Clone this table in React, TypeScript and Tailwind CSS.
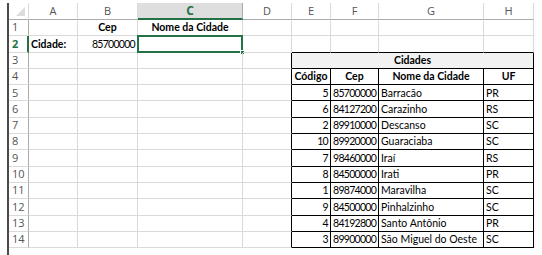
import React from 'react';

const cols = ['A', 'B', 'C', 'D', 'E', 'F', 'G', 'H'];

const cidades: [number, string, string, string][] = [
  [5, '85700000', 'Barracão', 'PR'],
  [6, '84127200', 'Carazinho', 'RS'],
  [2, '89910000', 'Descanso', 'SC'],
  [10, '89920000', 'Guaraciaba', 'SC'],
  [7, '98460000', 'Iraí', 'RS'],
  [8, '84500000', 'Irati', 'PR'],
  [1, '89874000', 'Maravilha', 'SC'],
  [9, '84500000', 'Pinhalzinho', 'SC'],
  [4, '84192800', 'Santo Antônio', 'PR'],
  [3, '89900000', 'São Miguel do Oeste', 'SC'],
];

type CellDef = { text?: string; bold?: boolean; num?: boolean; align?: 'l' | 'c' | 'r'; span?: number; bg?: string };

// builds the contents of row r (1-based), columns A..H
function rowCells(r: number): (CellDef | null)[] {
  const cells: (CellDef | null)[] = cols.map(() => ({}));
  if (r === 1) {
    cells[1] = { text: 'Cep', bold: true, align: 'c' };
    cells[2] = { text: 'Nome da Cidade', bold: true, align: 'c' };
  } else if (r === 2) {
    cells[0] = { text: 'Cidade:', bold: true };
    cells[1] = { text: '85700000', align: 'r', num: true };
  } else if (r === 3) {
    cells[4] = { text: 'Cidades', bold: true, align: 'c', span: 4, bg: 'bg-[#f2f2f2]' };
    cells[5] = null;
    cells[6] = null;
    cells[7] = null;
  } else if (r === 4) {
    cells[4] = { text: 'Código', bold: true, align: 'c' };
    cells[5] = { text: 'Cep', bold: true, align: 'c' };
    cells[6] = { text: 'Nome da Cidade', bold: true, align: 'c' };
    cells[7] = { text: 'UF', bold: true, align: 'c' };
  } else {
    const c = cidades[r - 5];
    cells[4] = { text: String(c[0]), align: 'r', num: true };
    cells[5] = { text: c[1], num: true };
    cells[6] = { text: c[2] };
    cells[7] = { text: c[3] };
  }
  return cells;
}

function borderFor(r: number, ci: number) {
  const inTable = r >= 3 && ci >= 4;
  const right = inTable || (r >= 3 && ci === 3) ? 'border-r-black' : 'border-r-[#dadada]';
  const bottom = inTable || (r === 2 && ci >= 4) ? 'border-b-black' : 'border-b-[#dadada]';
  return `${right} ${bottom}`;
}

export default function App() {
  const rows = Array.from({ length: 14 }, (_, i) => i + 1);

  return (
    <div className="w-[542px] h-[255px] bg-white overflow-hidden pl-[7px] pt-[3px] font-['Lato',sans-serif] text-[10.5px] text-black">
      <div className="border-l-2 border-[#4a4a4a] h-full">
        <div className="grid grid-cols-[20px_49px_60px_105px_49px_39px_48px_105px_50px] grid-rows-[17px_repeat(14,16.3px)]">
          {/* column headers */}
          <div className="relative border-r border-b border-r-[#dadada] border-b-[#ababab]">
            <svg className="absolute right-[3px] bottom-[3px]" width="9" height="9" viewBox="0 0 9 9">
              <polygon points="9,0 9,9 0,9" fill="#dcdcdc" />
            </svg>
          </div>
          {cols.map((c) =>
            c === 'C' ? (
              <div
                key={c}
                className="flex items-center justify-center bg-[#dedede] border-r border-r-[#ababab] border-b-2 border-b-[#217346] text-[#217346] font-bold text-[12px] font-['Open_Sans',sans-serif]"
              >
                {c}
              </div>
            ) : (
              <div
                key={c}
                className="flex items-center justify-center border-r border-b border-r-[#dadada] border-b-[#ababab] text-[#555] text-[11px] font-['Open_Sans',sans-serif]"
              >
                {c}
              </div>
            )
          )}

          {rows.map((r) => (
            <React.Fragment key={r}>
              <div
                className={`flex items-center pl-[3px] border-b border-b-[#dadada] font-['Open_Sans',sans-serif] text-[11px] ${
                  r === 2 ? 'border-r-2 border-r-[#217346] text-[#217346] font-bold' : 'border-r border-r-[#ababab] text-[#555]'
                }`}
              >
                {r}
              </div>
              {rowCells(r).map((cell, ci) => {
                if (!cell) return null;
                const align = cell.align === 'c' ? 'justify-center' : cell.align === 'r' ? 'justify-end' : 'justify-start';
                const span = cell.span === 4 ? 'col-span-4' : '';
                const selected = r === 2 && ci === 2;
                return (
                  <div
                    key={ci}
                    className={`relative flex items-center px-[2px] whitespace-nowrap leading-none border-r border-b ${borderFor(r, ci)} ${align} ${span} ${cell.bg ?? ''} ${cell.bold ? 'font-bold' : ''} ${cell.num ? 'tracking-[-0.7px]' : ''}`}
                  >
                    {cell.text}
                    {selected && (
                      <>
                        <div className="absolute -left-[1px] -top-[1px] -right-[1px] -bottom-[1px] border-2 border-[#217346]" />
                        <div className="absolute -right-[3px] -bottom-[3px] w-[5px] h-[5px] bg-[#217346] border border-white" />
                      </>
                    )}
                  </div>
                );
              })}
            </React.Fragment>
          ))}
        </div>
      </div>
    </div>
  );
}
